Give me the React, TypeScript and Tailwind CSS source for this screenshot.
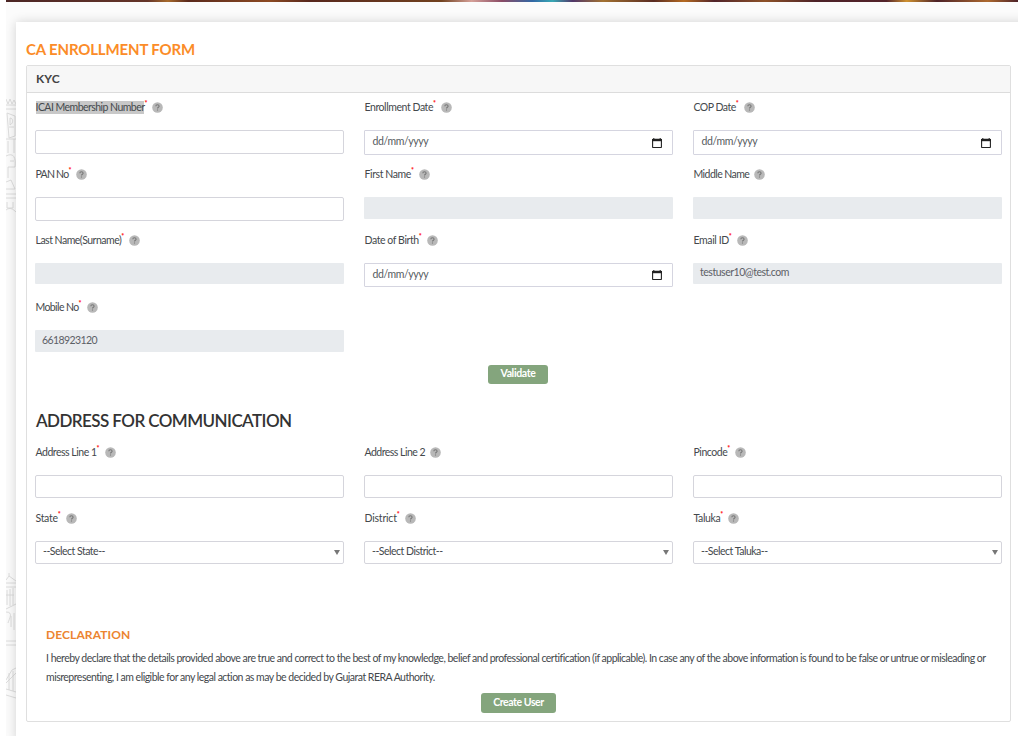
import React from "react";

type FieldProps = {
  label: string;
  tracking: string;
  required?: boolean;
  selected?: boolean;
  children: React.ReactNode;
};

function HelpIcon() {
  return (
    <svg className="ml-[5px] block size-[11px] shrink-0" viewBox="0 0 11 11">
      <circle cx="5.5" cy="5.5" r="5.3" fill="#b8b8b8" />
      <path d="M3.8 4.2C3.8 2.3 7.1 2.3 7.1 4.2C7.1 5.3 5.5 5.2 5.5 6.6M5.5 7.5V8.6" fill="none" stroke="#777" strokeWidth="1.1" />
    </svg>
  );
}

function Field({ label, tracking, required, selected, children }: FieldProps) {
  return (
    <div>
      <div className="mb-[13px] flex h-5 items-center pl-[0.5px] whitespace-nowrap text-[10.5px] leading-[13px]">
        <span className={`${tracking} ${selected ? "bg-[#c8c8c8]" : ""}`}>{label}</span>
        {required ? (
          <span className="-mt-[8px] block h-[7px] w-[3px] text-[7px] leading-[7px] font-black text-[#ff1010]">*</span>
        ) : null}
        <HelpIcon />
      </div>
      {children}
    </div>
  );
}

function TextBox({ height = "h-6" }: { height?: string }) {
  return <div className={`${height} rounded-[2px] border border-[#d5d5dc] bg-white`} />;
}

function Disabled({ value, height = "h-[22px]", tracking = "" }: { value?: string; height?: string; tracking?: string }) {
  return (
    <div className={`${height} ${tracking} flex items-center rounded-[1px] bg-[#e8ebee] px-[7px] pb-[1px] text-[10.5px] text-[#5c6066]`}>
      {value}
    </div>
  );
}

function DateBox({ height = "h-[25px]" }: { height?: string }) {
  return (
    <div className={`${height} flex items-center justify-between rounded-[1px] border border-[#d5d5e0] bg-white pl-[7.5px] pr-[10px] text-[10.5px] text-[#555b60]`}>
      <span className="pb-[1px] tracking-[-0.4px]">dd/mm/yyyy</span>
      <svg className="size-[10px]" viewBox="0 0 10 10">
        <path d="M1.8 0V1.5M8.2 0V1.5" stroke="#222" />
        <rect x="0.6" y="1.3" width="8.8" height="8.2" rx="0.5" fill="none" stroke="#222" strokeWidth="1.1" />
        <path d="M0 1H10V3.2H0Z" fill="#222" />
      </svg>
    </div>
  );
}

function SelectBox({ value }: { value: string }) {
  return (
    <div className="flex h-[23px] items-center justify-between rounded-[2px] border border-[#d5d5dc] bg-white pb-[1px] pl-[7px] pr-[3px] text-[10.5px] tracking-[-0.5px] text-[#44484c]">
      <span>{value}</span>
      <svg className="h-[5px] w-[6px]" viewBox="0 0 6 5">
        <path d="M0 0H6L3 5Z" fill="#777" />
      </svg>
    </div>
  );
}

function Sketch() {
  return (
    <svg className="block h-[713px] w-[10px] shrink-0" viewBox="0 22 10 713" fill="none" stroke="#d6d6d6" strokeWidth="0.8">
      <path d="M0 99L2 104L4 99L6 104L8 100L10 104M0 105H10M0 109H10M1 113L9 116V136L3 138L1 113M4 118C7 118 8 123 4 125ZM3 127H8M0 139H10M2 141V153M8 139V153M0 156C8 152 10 158 9 167H2V178M4 161H8M0 182L5 180L9 189H0M0 194H10M0 198H10M1 202V208H7V202M0 210C4 207 7 209 10 212" />
      <path d="M3 573V576M0 580L3 576L10 581M0 583H10M0 587H10M1 590V605M4 589V606M7 588V605M0 595H8M0 609L10 604M0 612C8 612 3 619 2 623M5 616V627M8 613V630M0 641H10M0 645H10M0 680L6 670L10 668M0 683L10 673M3 673V690M7 671V691M0 689L10 692M0 695L10 698" />
    </svg>
  );
}

export default function App() {
  return (
    <div className="h-[736px] w-[1034px] overflow-hidden bg-white pl-[6px] font-['Lato',sans-serif] text-[#44484c]">
      <div className="flex h-full w-[1012px] flex-col overflow-hidden bg-[#fbfbfb]">
        <div className="h-[2px] shrink-0 bg-[linear-gradient(90deg,#4b2524_0%,#653529_14%,#a76a2c_16%,#5a291c_18%,#8c4a22_26%,#57271d_30%,#71411f_43%,#d5a098_46%,#8a4b65_49%,#3267a4_52%,#38a8b4_54%,#513769_56%,#a27131_59%,#592b22_64%,#b56a22_67%,#51242a_70%,#8d5128_75%,#4d2228_80%,#53232a_87%,#cf9130_89%,#4d2228_92%,#ad692f_97%,#4d2228_100%)]" />
        <div className="flex h-5 shrink-0" />
        <div className="flex flex-1">
          <Sketch />
          <main className="h-[720px] w-[1020px] shrink-0 bg-white px-[10px] pt-[17px] shadow-[0_0_10px_rgba(0,0,0,0.16)]">
            <h1 className="h-[26px] text-[15px] leading-5 font-bold tracking-[-0.15px] text-[#fb8c28]">CA ENROLLMENT FORM</h1>
            <section className="h-[657px] w-[985px] rounded-[2px] border border-[#dfdfdf]">
              <h2 className="flex h-[27px] items-center border-b border-[#dcdcdc] bg-[#f7f7f7] px-[9px] text-[12px] font-bold tracking-[0.1px] text-[#444]">KYC</h2>
              <div className="grid h-[272px] grid-cols-[309px_309px_309px] grid-rows-[67px_66px_67px_60px] gap-x-5 pt-[4px] pl-[8px]">
                <Field label="ICAI Membership Number" tracking="tracking-[-0.54px]" required selected><TextBox /></Field>
                <Field label="Enrollment Date" tracking="tracking-[-0.43px]" required><DateBox /></Field>
                <Field label="COP Date" tracking="tracking-[-0.5px]" required><DateBox /></Field>
                <Field label="PAN No" tracking="tracking-[-0.75px]" required><TextBox /></Field>
                <Field label="First Name" tracking="tracking-[-0.4px]" required><Disabled /></Field>
                <Field label="Middle Name" tracking="tracking-[-0.55px]"><Disabled /></Field>
                <Field label="Last Name(Surname)" tracking="tracking-[-0.5px]" required><Disabled height="h-[21px]" /></Field>
                <Field label="Date of Birth" tracking="tracking-[-0.42px]" required><DateBox height="h-6" /></Field>
                <Field label="Email ID" tracking="tracking-[-0.38px]" required><Disabled value="testuser10@test.com" height="h-[21px]" tracking="tracking-[-0.47px]" /></Field>
                <Field label="Mobile No" tracking="tracking-[-0.6px]" required><Disabled value="6618923120" tracking="tracking-[-0.6px]" /></Field>
              </div>
              <div className="flex h-[19px] justify-center pr-[1px]">
                <button className="h-[19px] w-[60px] rounded-[3px] bg-[#84a57d] pb-[2px] text-[10.5px] leading-[17px] font-bold tracking-[-0.35px] text-white">Validate</button>
              </div>
              <h2 className="mt-[25px] h-[33px] pl-[9px] text-[17px] leading-6 font-semibold tracking-[-0.57px] text-[#333]">ADDRESS FOR COMMUNICATION</h2>
              <div className="grid h-[181px] grid-cols-[309px_309px_309px] grid-rows-[66px_60px] gap-x-5 pl-[8px]">
                <Field label="Address Line 1" tracking="tracking-[-0.48px]" required><TextBox height="h-[23px]" /></Field>
                <Field label="Address Line 2" tracking="tracking-[-0.52px]"><TextBox height="h-[23px]" /></Field>
                <Field label="Pincode" tracking="tracking-[-0.45px]" required><TextBox height="h-[23px]" /></Field>
                <Field label="State" tracking="tracking-[-0.3px]" required><SelectBox value="--Select State--" /></Field>
                <Field label="District" tracking="tracking-[-0.2px]" required><SelectBox value="--Select District--" /></Field>
                <Field label="Taluka" tracking="tracking-[-0.4px]" required><SelectBox value="--Select Taluka--" /></Field>
              </div>
              <div className="px-[19px]">
                <h3 className="h-[26px] text-[12px] leading-[24px] font-bold tracking-[0.1px] text-[#ec8430]">DECLARATION</h3>
                <p className="whitespace-nowrap text-[10.5px] leading-[19px] tracking-[-0.5px]">
                  I hereby declare that the details provided above are true and correct to the best of my knowledge, belief and professional certification (if applicable). In case any of the above information is found to be false or untrue or misleading or
                  <br />
                  misrepresenting, I am eligible for any legal action as may be decided by Gujarat RERA Authority.
                </p>
              </div>
              <div className="mt-[6px] flex justify-center">
                <button className="h-[20px] w-[75px] rounded-[3px] bg-[#84a57d] pb-[2px] text-[10.5px] leading-[18px] font-bold tracking-[-0.45px] text-white">Create User</button>
              </div>
            </section>
          </main>
        </div>
      </div>
    </div>
  );
}
